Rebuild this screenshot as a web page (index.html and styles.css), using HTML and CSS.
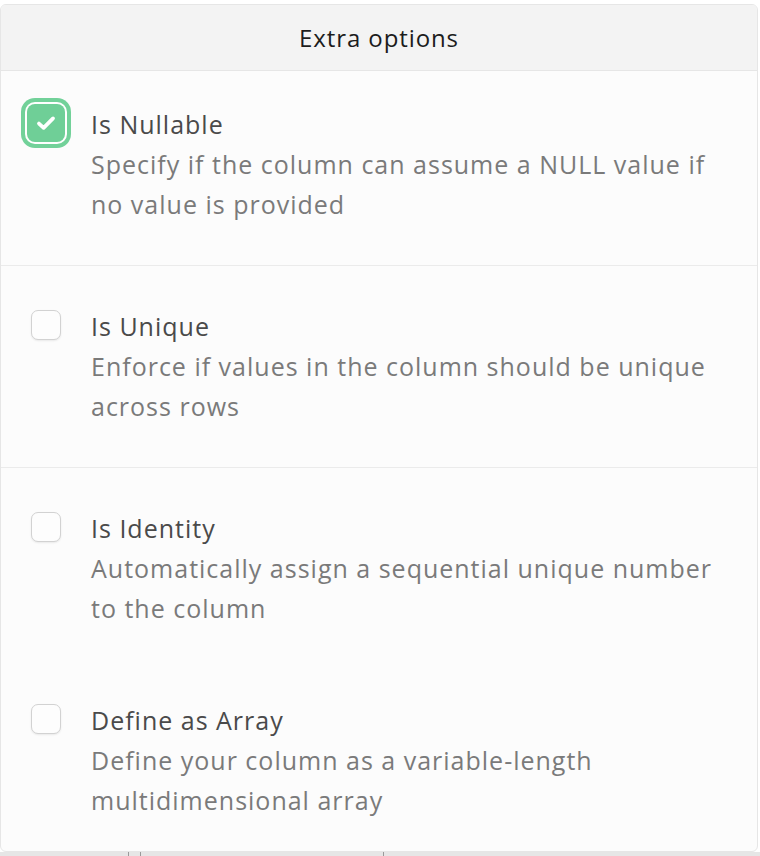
FILE: index.html
```html
<!DOCTYPE html>
<html>
<head>
<meta charset="utf-8">
<link rel="stylesheet" href="styles.css">
</head>
<body>
<div class="page">
  <div class="panel">
    <div class="panel-header">Extra options</div>
    <div class="option option-first">
      <div class="box-cell"><span class="box box-checked"><svg viewBox="0 0 24 24" width="26" height="26"><path d="M5.5 12.5l4.3 4 8.7-8.8" fill="none" stroke="#fff" stroke-width="3.4" stroke-linecap="round" stroke-linejoin="round"/></svg></span></div>
      <div class="text">
        <div class="label">Is Nullable</div>
        <div class="desc">Specify if the column can assume a NULL value if no value is provided</div>
      </div>
    </div>
    <div class="option">
      <div class="box-cell"><span class="box"></span></div>
      <div class="text">
        <div class="label">Is Unique</div>
        <div class="desc">Enforce if values in the column should be unique across rows</div>
      </div>
    </div>
    <div class="option option-nodiv">
      <div class="box-cell"><span class="box"></span></div>
      <div class="text">
        <div class="label">Is Identity</div>
        <div class="desc">Automatically assign a sequential unique number to the column</div>
      </div>
    </div>
    <div class="option option-last">
      <div class="box-cell"><span class="box"></span></div>
      <div class="text">
        <div class="label">Define as Array</div>
        <div class="desc">Define your column as a variable-length multidimensional array</div>
      </div>
    </div>
  </div>
  <div class="under"><span class="tick t1"></span><span class="tick t2"></span><span class="tick t3"></span></div>
</div>
</body>
</html>
```
FILE: styles.css
```css
html, body {
  margin: 0;
  padding: 0;
  background: #ffffff;
}
body {
  font-family: "Open Sans", "Lato", sans-serif;
  width: 760px;
  height: 856px;
  overflow: hidden;
}
.page {
  padding-top: 4px;
}
.panel {
  width: 758px;
  height: 848px;
  box-sizing: border-box;
  background: #fcfcfc;
  border: 1px solid #e6e6e6;
  border-radius: 6px;
  overflow: hidden;
  display: flex;
  flex-direction: column;
}
.panel-header {
  height: 65px;
  background: #f3f3f3;
  border-bottom: 1px solid #e6e6e6;
  display: flex;
  align-items: center;
  justify-content: center;
  font-size: 24px;
  letter-spacing: 0.9px;
  color: #1c1c1c;
}
.option {
  display: flex;
  padding: 40px 0 41px 0;
  border-bottom: 1px solid #ebebeb;
}
.option-first {
  padding-top: 33px;
}
.option-nodiv {
  border-bottom: none;
}
.option-last {
  padding-top: 31px;
  padding-bottom: 0;
  border-bottom: none;
}
.box-cell {
  width: 90px;
  height: 38px;
  display: flex;
  align-items: center;
  padding-left: 30px;
  box-sizing: border-box;
}
.box {
  width: 30px;
  height: 30px;
  box-sizing: border-box;
  border: 1px solid #d2d2d2;
  border-radius: 7px;
  background: #fdfdfd;
  box-shadow: 0 1px 2px rgba(0,0,0,0.08);
  display: flex;
  align-items: center;
  justify-content: center;
}
.box-checked {
  width: 38px;
  height: 38px;
  margin-left: -4px;
  border: none;
  border-radius: 8px;
  background: #6fcf97;
  box-shadow: 0 0 0 2px #ffffff, 0 0 0 6px #72d199;
}
.text {
  width: 634px;
}
.label {
  font-size: 25px;
  line-height: 40px;
  letter-spacing: 1px;
  color: #4a4a4a;
}
.desc {
  font-size: 25px;
  line-height: 40px;
  letter-spacing: 1px;
  color: #7a7a7a;
}
.under {
  height: 4px;
  background: #e6e6e6;
  position: relative;
}
.tick {
  position: absolute;
  top: 0;
  width: 1px;
  height: 4px;
  background: #9a9a9a;
}
.t1 { left: 128px; }
.t2 { left: 140px; }
.t3 { left: 383px; }
```
